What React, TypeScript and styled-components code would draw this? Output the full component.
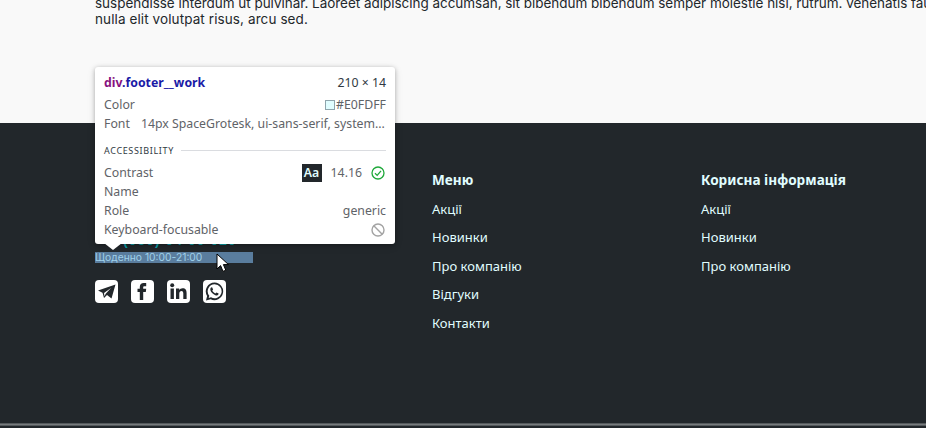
import React from "react";
import styled, { createGlobalStyle } from "styled-components";

const Global = createGlobalStyle`
  html, body { margin: 0; padding: 0; width: 926px; height: 428px; overflow: hidden; background: #f9f9f9; }
  * { box-sizing: border-box; }
`;

const Page = styled.div`
  width: 926px;
  height: 428px;
  display: flex;
  flex-direction: column;
  overflow: hidden;
  position: relative;
`;

const Article = styled.section`
  height: 123px;
  flex: none;
  padding-left: 95px;
  overflow: hidden;
  background: #f9f9f9;
`;

const Copy = styled.p`
  margin: -5px 0 0;
  width: 850px;
  font: 13.5px/16px "Inter", "Liberation Sans", sans-serif;
  color: #23282c;
  white-space: nowrap;
`;

const CopyLine = styled.span<{ $spacing: number }>`
  display: block;
  letter-spacing: ${(p) => p.$spacing}px;
`;

const Footer = styled.footer`
  flex: 1;
  background: #22272b;
  display: grid;
  grid-template-columns: 337px 269px 1fr;
  padding: 47px 0 0 95px;
  position: relative;
`;

const Scrollbar = styled.div`
  position: absolute;
  left: 0;
  right: 0;
  bottom: 2px;
  height: 3px;
  border-top: 1px solid #555a5d;
  border-bottom: 1px solid #555a5d;
  background: #777b7d;
`;

const Contact = styled.div`
  display: flex;
  flex-direction: column;
  padding-top: 63px;
`;

const Phone = styled.div`
  height: 14px;
  font: 700 14px/14px "Liberation Sans", sans-serif;
  color: #0a9fa8;
  padding-left: 28px;
  letter-spacing: 1px;
`;

const Work = styled.div`
  width: 158px;
  height: 11px;
  margin-top: 5px;
  background: #5a7d9e;
  color: #9fd0ea;
  font: 10.3px/10px "Inter", "Liberation Sans", sans-serif;
  white-space: nowrap;
`;

const Socials = styled.div`
  display: flex;
  gap: 13px;
  margin-top: 17px;
`;

const Social = styled.svg`
  width: 23px;
  height: 23px;
  display: block;
`;

const Column = styled.nav`
  display: flex;
  flex-direction: column;
  align-items: flex-start;
`;

const Heading = styled.div`
  font: 700 13.6px/20px "Noto Sans", "Liberation Sans", sans-serif;
  color: #e0fdff;
  margin-bottom: 8.6px;
`;

const NavLink = styled.a`
  font: 13px/20px "Noto Sans", "Liberation Sans", sans-serif;
  color: #e0fdff;
  margin-bottom: 8.5px;
`;

const Tooltip = styled.div`
  position: absolute;
  left: 95px;
  top: 67px;
  width: 300px;
  height: 177px;
  background: #fff;
  border-radius: 3px;
  box-shadow: 0 1px 4px rgba(0, 0, 0, 0.25), 0 2px 8px rgba(0, 0, 0, 0.12);
  padding: 7px 9px 0;
  font: 12.3px/19px "Noto Sans", "Liberation Sans", sans-serif;
  color: #5f6368;
  &::after {
    content: "";
    position: absolute;
    left: 9px;
    bottom: -6px;
    width: 0;
    height: 0;
    border-left: 9px solid transparent;
    border-right: 9px solid transparent;
    border-top: 7px solid #fff;
  }
`;

const Row = styled.div`
  display: flex;
  justify-content: space-between;
  align-items: center;
  height: 19px;
`;

const TitleRow = styled(Row)`
  height: 16px;
  margin-bottom: 5px;
  color: #303942;
`;

const Selector = styled.span`
  font-weight: 700;
  font-size: 12.3px;
  color: #1a1aa6;
`;

const Tag = styled.span`
  color: #881280;
`;

const Swatch = styled.span`
  display: inline-block;
  width: 10px;
  height: 10px;
  background: #e0fdff;
  border: 1px solid #8fa5ad;
`;

const ColorValue = styled.span`
  display: flex;
  align-items: center;
  gap: 1px;
`;

const FontValue = styled.span`
  margin-left: 11px;
  flex: 1;
  white-space: nowrap;
  overflow: hidden;
`;

const Section = styled.div`
  display: flex;
  align-items: center;
  gap: 7px;
  height: 13px;
  margin: 11px 0 6px;
  font-size: 9px;
  line-height: 13px;
  letter-spacing: 0.65px;
  color: #303942;
  &::after {
    content: "";
    flex: 1;
    height: 1px;
    background: #dadce0;
  }
`;

const ContrastValue = styled.span`
  display: flex;
  align-items: center;
`;

const Sample = styled.span`
  width: 20px;
  height: 18px;
  background: #22272b;
  color: #e0fdff;
  font-weight: 600;
  font-size: 12.3px;
  line-height: 18px;
  text-align: center;
  margin-right: 9px;
`;

const Ratio = styled.span`
  margin-right: 9px;
`;

const StatusIcon = styled.svg`
  width: 14px;
  height: 14px;
  margin-right: 1px;
  display: block;
  fill: none;
`;

const Cursor = styled.svg`
  position: absolute;
  left: 216px;
  top: 253px;
  width: 15px;
  height: 20px;
`;

function SocialIcon({ children }: { children: React.ReactNode }) {
  return (
    <Social viewBox="0 0 23 23">
      <rect width="23" height="23" rx="4" fill="#fff" />
      <g fill="#22272b">{children}</g>
    </Social>
  );
}

const menu = ["Акції", "Новинки", "Про компанію", "Відгуки", "Контакти"];
const info = ["Акції", "Новинки", "Про компанію"];

export default function App() {
  return (
    <Page>
      <Global />
      <Article>
        <Copy>
          <CopyLine $spacing={-0.03}>
            suspendisse interdum ut pulvinar. Laoreet adipiscing accumsan, sit bibendum bibendum semper molestie nisi, rutrum. venenatis faucibus
          </CopyLine>
          <CopyLine $spacing={0.1}>nulla elit volutpat risus, arcu sed.</CopyLine>
        </Copy>
      </Article>
      <Footer>
        <Contact>
          <Phone>(050) 04 00 020</Phone>
          <Work>Щоденно 10:00-21:00</Work>
          <Socials>
            <SocialIcon>
              <path fillRule="evenodd" d="M20.500 4.500 3 10.500l4.500 2.300L9 18l3-3 4.500 3.500zM9 13l7-5-5.300 5.800-1.200 2.500z" />
            </SocialIcon>
            <SocialIcon>
              <path d="M8.800 20v-8H6.500V8.800h2.300V7c0-2.700 1.500-4 3.900-4h2.500v3.200h-1.700c-1 0-1.300.5-1.300 1.300v1.300h3l-.4 3.200h-2.600v8z" />
            </SocialIcon>
            <SocialIcon>
              <rect x="3.500" y="8.500" width="3.400" height="10.500" />
              <circle cx="5.200" cy="5.200" r="2" />
              <path d="M9 8.500h3.200V10c.7-1.100 1.900-1.800 3.400-1.800 3 0 4 2 4 4.800v6h-3.300v-5.400c0-1.500-.5-2.500-1.800-2.500s-2.200 1-2.200 2.500V19H9z" />
            </SocialIcon>
            <SocialIcon>
              <path fillRule="evenodd" d="M11.600 2.500a8.800 8.800 0 0 0-7.500 13.400L3 20.500l4.700-1.200A8.800 8.800 0 1 0 11.600 2.500zm0 1.800a7 7 0 1 1-3.600 13l-2.300.6.6-2.200a7 7 0 0 1 5.300-11.400zM8.700 7.200c-.5 0-1.400.7-1.400 2.200s1.100 3 2.700 4.400c1.700 1.500 3.300 2 4.200 1.700.8-.3 1.400-1.100 1.400-1.900l-2.200-1.200-1 1.100c-1-.3-2.700-1.900-3.100-3l.8-1-1-2.300z" />
            </SocialIcon>
          </Socials>
        </Contact>
        <Column>
          <Heading>Меню</Heading>
          {menu.map((m) => <NavLink key={m}>{m}</NavLink>)}
        </Column>
        <Column>
          <Heading>Корисна інформація</Heading>
          {info.map((m) => <NavLink key={m}>{m}</NavLink>)}
        </Column>
        <Scrollbar />
      </Footer>
      <Tooltip>
        <TitleRow>
          <Selector><Tag>div</Tag>.footer__work</Selector>
          <span>210 × 14</span>
        </TitleRow>
        <Row>
          <span>Color</span>
          <ColorValue><Swatch />#E0FDFF</ColorValue>
        </Row>
        <Row>
          <span>Font</span>
          <FontValue>14px SpaceGrotesk, ui-sans-serif, system...</FontValue>
        </Row>
        <Section>ACCESSIBILITY</Section>
        <Row>
          <span>Contrast</span>
          <ContrastValue>
            <Sample>Aa</Sample>
            <Ratio>14.16</Ratio>
            <StatusIcon viewBox="0 0 14 14" stroke="#1fa83a" strokeWidth="1.3">
              <circle cx="7" cy="7" r="6" />
              <path d="M4 7.200 6.200 9.400 10 4.800" />
            </StatusIcon>
          </ContrastValue>
        </Row>
        <Row><span>Name</span></Row>
        <Row><span>Role</span><span>generic</span></Row>
        <Row>
          <span>Keyboard-focusable</span>
          <StatusIcon viewBox="0 0 14 14" stroke="#a3a3a3" strokeWidth="1.4">
            <circle cx="7" cy="7" r="6" />
            <path d="M2.800 2.800 11.200 11.200" />
          </StatusIcon>
        </Row>
      </Tooltip>
      <Cursor viewBox="0 0 15 20">
        <path d="M1 1v15l3.600-3.400 2.400 5.800 2.800-1.200-2.400-5.600H12.500z" fill="#fff" stroke="#000" strokeWidth="1" />
      </Cursor>
    </Page>
  );
}
